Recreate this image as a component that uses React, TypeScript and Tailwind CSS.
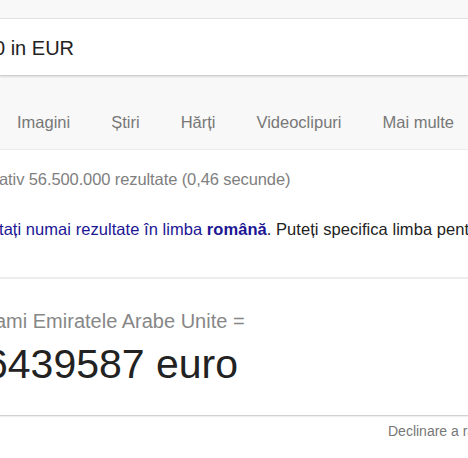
import React from "react";

export default function App() {
  const tabs = ["Imagini", "Știri", "Hărți", "Videoclipuri", "Mai multe"];
  return (
    <div
      className="w-[468px] h-[458px] overflow-hidden bg-white relative"
      style={{ fontFamily: '"Liberation Sans", Arial, sans-serif' }}
    >
      {/* top band */}
      <div className="h-[19px] bg-[#f8f8f8] border-b border-[#e4e4e4]" />
      {/* search box */}
      <div className="h-[57px] bg-white border-b border-[#cfcfcf] shadow-[0_1px_2px_rgba(0,0,0,0.12)] pt-[17px] relative z-10">
        <div className="ml-[-6px] text-[20px] leading-[24px] text-[#222] whitespace-nowrap">0 in EUR</div>
      </div>
      {/* tabs band */}
      <div className="h-[74px] bg-[#f8f8f8] border-b border-[#ebebeb] pt-[36px]">
        <div className="flex gap-[41px] pl-[17px] text-[16.5px] leading-[20px] text-[#777] whitespace-nowrap">
          {tabs.map((t) => (
            <span key={t}>{t}</span>
          ))}
        </div>
      </div>
      {/* results count */}
      <div className="pt-[19px] text-[16.5px] leading-[20px] text-[#808080] whitespace-nowrap ml-[-1px] tracking-[-0.1px]">
        ativ 56.500.000 rezultate (0,46 secunde)
      </div>
      {/* language line */}
      <div className="mt-[30px] text-[16.5px] leading-[20px] text-[#222] whitespace-nowrap ml-[-1px] tracking-[0.05px]">
        <span className="text-[#1c1694]">
          tați numai rezultate în limba <b className="text-[#1c1694]">română</b>
        </span>
        . Puteți specifica limba pentru căutare
      </div>
      {/* separator */}
      <div className="mt-[38px] h-[2px] bg-[#ececec]" />
      {/* conversion */}
      <div className="pt-[30px] ml-[-5px] text-[20px] leading-[24px] text-[#878787] whitespace-nowrap">
        ami Emiratele Arabe Unite =
      </div>
      <div className="mt-[7px] ml-[-15px] text-[41px] leading-[48px] text-[#222] whitespace-nowrap">
        6439587 euro
      </div>
      {/* bottom separator */}
      <div className="mt-[27px] h-px bg-[#d2d2d2] shadow-[0_1px_1px_rgba(0,0,0,0.08)]" />
      <div className="mt-[7px] pl-[388px] text-[14px] leading-[16px] text-[#777] whitespace-nowrap">
        Declinare a răspunderii
      </div>
    </div>
  );
}
